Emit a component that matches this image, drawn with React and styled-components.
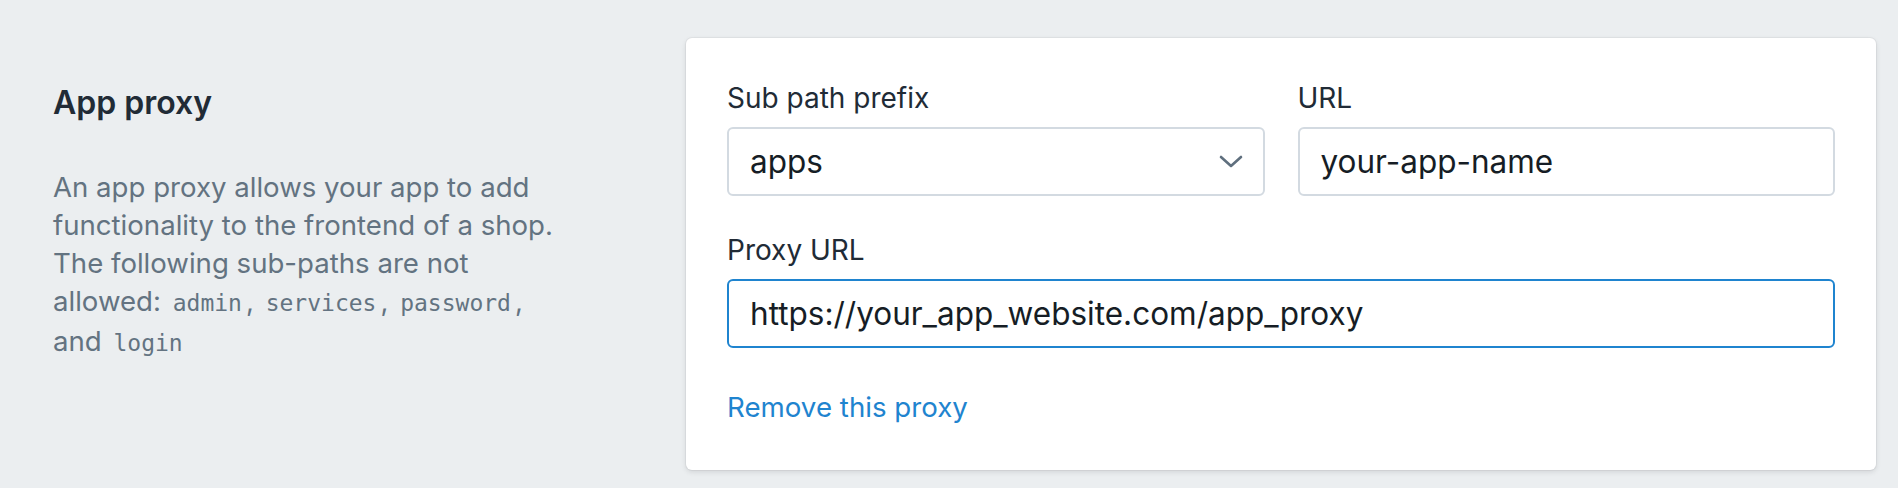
import React from "react";
import styled, { createGlobalStyle } from "styled-components";

const Global = createGlobalStyle`
  html, body {
    margin: 0;
    padding: 0;
    background: #ebeef0;
  }
  body {
    font-family: Inter, "Liberation Sans", sans-serif;
    -webkit-font-smoothing: antialiased;
  }
  * { box-sizing: border-box; }
`;

const Page = styled.div`
  display: flex;
  align-items: flex-start;
  min-height: 488px;
  padding: 38px 22px 20px 53px;
`;

const Annotation = styled.div`
  flex: 0 0 633px;
  padding-top: 42px;
`;

const Heading = styled.h2`
  margin: 0;
  font-size: 32px;
  line-height: 46px;
  font-weight: 600;
  color: #212b36;
`;

const Description = styled.p`
  margin: 42px 0 0;
  font-size: 27.6px;
  line-height: 38px;
  color: #637381;
`;

const Code = styled.code`
  font-family: "DejaVu Sans Mono", "Liberation Mono", monospace;
  font-size: 23px;
  padding: 0 4px;
  color: #637381;
`;

const Card = styled.div`
  flex: 1;
  background: #ffffff;
  border-radius: 6px;
  box-shadow: 0 0 0 1px rgba(63, 63, 68, 0.05), 0 2px 5px rgba(63, 63, 68, 0.15);
  padding: 41px 41px 44px;
`;

const Row = styled.div`
  display: grid;
  grid-template-columns: 1fr 1fr;
  column-gap: 33px;
`;

const Field = styled.div`
  display: flex;
  flex-direction: column;
  margin-top: ${(p) => (p.$spaced ? "35px" : "0")};
`;

const Label = styled.label`
  font-size: 28px;
  line-height: 38px;
  color: #212b36;
  margin-bottom: 10px;
`;

const Box = styled.div`
  display: flex;
  align-items: center;
  justify-content: space-between;
  height: 69px;
  border: 2px solid ${(p) => (p.$focused ? "#1f84cf" : "#d3dae1")};
  border-radius: 6px;
  background: #fff;
  padding: 0 20px 0 21px;
  font-size: 31.5px;
  color: #161d25;
`;

const Chevron = styled.svg`
  width: 24px;
  height: 14px;
  flex: none;
`;

const Link = styled.a`
  display: block;
  margin-top: 40px;
  font-size: 27.7px;
  line-height: 38px;
  color: #1f84cf;
  text-decoration: none;
`;

export default function App() {
  return (
    <>
      <Global />
      <Page>
        <Annotation>
          <Heading>App proxy</Heading>
          <Description>
            An app proxy allows your app to add
            <br />
            functionality to the frontend of a shop.
            <br />
            The following sub-paths are not
            <br />
            allowed: <Code>admin</Code>, <Code>services</Code>,{" "}
            <Code>password</Code>,
            <br />
            and <Code>login</Code>
          </Description>
        </Annotation>
        <Card>
          <Row>
            <Field>
              <Label>Sub path prefix</Label>
              <Box>
                <span>apps</span>
                <Chevron viewBox="0 0 24 14" fill="none">
                  <path
                    d="M2 2 L12 11 L22 2"
                    stroke="#5f6f7e"
                    strokeWidth="2.6"
                    strokeLinecap="round"
                    strokeLinejoin="round"
                  />
                </Chevron>
              </Box>
            </Field>
            <Field>
              <Label>URL</Label>
              <Box>
                <span>your-app-name</span>
              </Box>
            </Field>
          </Row>
          <Field $spaced>
            <Label>Proxy URL</Label>
            <Box $focused>
              <span>https://your_app_website.com/app_proxy</span>
            </Box>
          </Field>
          <Link href="#">Remove this proxy</Link>
        </Card>
      </Page>
    </>
  );
}
